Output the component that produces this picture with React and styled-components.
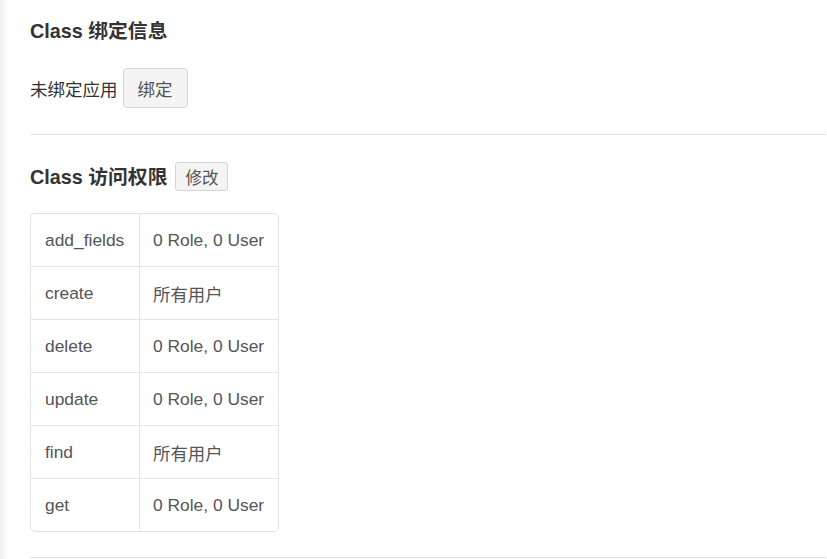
import React from "react";
import styled, { createGlobalStyle } from "styled-components";

const Global = createGlobalStyle`
  html, body { margin: 0; padding: 0; background: #fff; }
  body { font-family: "Liberation Sans", "Noto Sans CJK SC", sans-serif; color: #333; }
`;

const Page = styled.div`
  min-height: 559px;
  padding: 20px 1px 0 30px;
  box-shadow: inset 9px 0 8px -7px rgba(0, 0, 0, 0.09);
`;

const Heading = styled.h3`
  margin: 0;
  font-size: 19.8px;
  line-height: 22px;
  font-weight: bold;
  color: #333;
`;

const HeadingRow = styled.div`
  display: flex;
  align-items: center;
  gap: 8px;
  height: 29px;
`;

const InfoRow = styled.div`
  display: flex;
  align-items: center;
  gap: 5px;
  margin-top: 26px;
  font-size: 17.5px;
  color: #333;
`;

const Button = styled.button`
  box-sizing: border-box;
  font-family: inherit;
  font-size: ${(p) => (p.$small ? "16.5px" : "17.5px")};
  height: ${(p) => (p.$small ? "29px" : "40px")};
  padding: ${(p) => (p.$small ? "0 9px" : "0 14px")};
  color: #555;
  background: #f4f4f4;
  border: 1px solid #d4d4d4;
  border-radius: ${(p) => (p.$small ? "3px" : "4px")};
  cursor: pointer;
`;

const Rule = styled.hr`
  border: 0;
  border-top: 1px solid #e2e2e2;
  margin: ${(p) => p.$margin};
  height: 0;
`;

const Table = styled.table`
  border-collapse: separate;
  border-spacing: 0;
  width: 249px;
  border: 1px solid #e2e2e2;
  border-radius: 5px;
  margin-top: 22px;
  font-size: 17.4px;
  color: #555;
`;

const Cell = styled.td`
  height: 52px;
  padding: 0 ${(p) => (p.$first ? "13px" : "0")} 0 ${(p) => (p.$first ? "14px" : "13px")};
  white-space: nowrap;
  border-top: ${(p) => (p.$top ? "0" : "1px solid #e6e6e6")};
  border-left: ${(p) => (p.$first ? "0" : "1px solid #e6e6e6")};
  width: ${(p) => (p.$first ? "81px" : "auto")};
`;

const rows = [
  ["add_fields", "0 Role, 0 User"],
  ["create", "所有用户"],
  ["delete", "0 Role, 0 User"],
  ["update", "0 Role, 0 User"],
  ["find", "所有用户"],
  ["get", "0 Role, 0 User"],
];

export default function App() {
  return (
    <>
      <Global />
      <Page>
        <Heading>Class 绑定信息</Heading>
        <InfoRow>
          <span>未绑定应用</span>
          <Button>绑定</Button>
        </InfoRow>
        <Rule $margin="26px 0 27px" />
        <HeadingRow>
          <Heading>Class 访问权限</Heading>
          <Button $small>修改</Button>
        </HeadingRow>
        <Table>
          <tbody>
            {rows.map(([k, v], i) => (
              <tr key={k}>
                <Cell $first $top={i === 0}>{k}</Cell>
                <Cell $top={i === 0}>{v}</Cell>
              </tr>
            ))}
          </tbody>
        </Table>
        <Rule $margin="25px 0 0" />
      </Page>
    </>
  );
}
